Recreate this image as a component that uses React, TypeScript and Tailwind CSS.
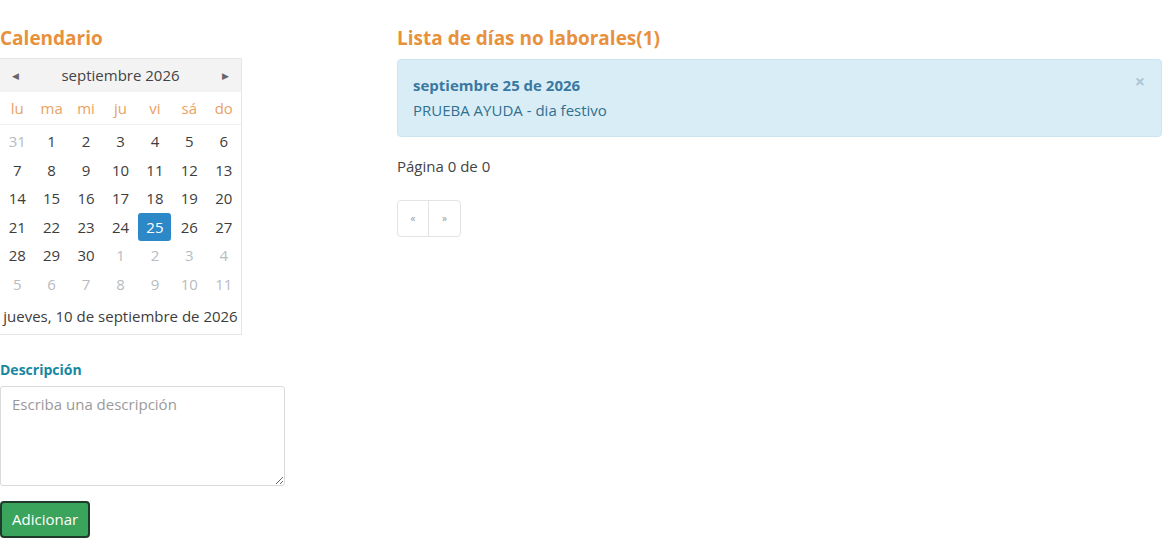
const weeks: { d: number; out?: boolean }[][] = [
  [{ d: 31, out: true }, { d: 1 }, { d: 2 }, { d: 3 }, { d: 4 }, { d: 5 }, { d: 6 }],
  [{ d: 7 }, { d: 8 }, { d: 9 }, { d: 10 }, { d: 11 }, { d: 12 }, { d: 13 }],
  [{ d: 14 }, { d: 15 }, { d: 16 }, { d: 17 }, { d: 18 }, { d: 19 }, { d: 20 }],
  [{ d: 21 }, { d: 22 }, { d: 23 }, { d: 24 }, { d: 25 }, { d: 26 }, { d: 27 }],
  [{ d: 28 }, { d: 29 }, { d: 30 }, { d: 1, out: true }, { d: 2, out: true }, { d: 3, out: true }, { d: 4, out: true }],
  [{ d: 5, out: true }, { d: 6, out: true }, { d: 7, out: true }, { d: 8, out: true }, { d: 9, out: true }, { d: 10, out: true }, { d: 11, out: true }],
]

const weekdays = ['lu', 'ma', 'mi', 'ju', 'vi', 'sá', 'do']

function Calendar() {
  return (
    <div className="w-[242px] border border-l-0 border-[#e6e6e6] bg-white">
      <div className="flex h-[33px] items-center justify-between bg-[#f3f3f4] px-3 text-[15px] text-[#444]">
        <span className="text-[9px] text-[#666]">◀</span>
        <span>septiembre 2026</span>
        <span className="text-[9px] text-[#666]">▶</span>
      </div>
      <div className="grid h-[33px] grid-cols-7 items-center border-b border-[#f0f0f0] text-[15px] text-[#e9a264]">
        {weekdays.map((w) => (
          <span key={w} className="text-center">{w}</span>
        ))}
      </div>
      <div className="pt-[2px]">
        {weeks.map((row, i) => (
          <div key={i} className="grid h-[28.5px] grid-cols-7 items-center text-[15px]">
            {row.map((c, j) => {
              const sel = !c.out && c.d === 25
              return (
                <div key={j} className="flex justify-center">
                  <span
                    className={
                      sel
                        ? 'flex h-[28px] w-[33px] items-center justify-center rounded-[3px] bg-[#2d88c8] text-white'
                        : c.out
                          ? 'text-[#b8bcc0]'
                          : 'text-[#3d3d3d]'
                    }
                  >
                    {c.d}
                  </span>
                </div>
              )
            })}
          </div>
        ))}
      </div>
      <div className="flex h-[36px] items-center justify-center text-[15px] text-[#3d3d3d]">
        jueves, 10 de septiembre de 2026
      </div>
    </div>
  )
}

export default function App() {
  return (
    <div
      className="flex min-h-[542px] gap-[112px] bg-white pt-[26px]"
      style={{ fontFamily: '"Open Sans", "Liberation Sans", sans-serif' }}
    >
      <div className="w-[285px] shrink-0">
        <h2 className="mb-[8px] h-[24px] text-[19px] font-bold leading-[24px] text-[#e8913d]">Calendario</h2>
        <Calendar />
        <label className="mt-[26px] block text-[14px] font-bold leading-[18px] text-[#17879f]">Descripción</label>
        <textarea
          placeholder="Escriba una descripción"
          className="mt-[7px] block h-[100px] w-[285px] rounded-[3px] border border-[#d9d9d9] px-[11px] py-[6px] text-[15px] text-[#444] placeholder:text-[#9a9a9a] focus:outline-none"
        />
        <button className="mt-[15px] h-[37px] rounded-[4px] border-2 border-[#1e3a2a] bg-[#3aa35c] px-[10px] text-[15px] text-white">
          Adicionar
        </button>
      </div>
      <div className="flex-1 pr-[2px]">
        <h2 className="mb-[9px] h-[24px] text-[19px] font-bold leading-[24px] text-[#e8913d]">
          Lista de días no laborales(1)
        </h2>
        <div className="relative h-[78px] rounded-[4px] border border-[#c9e6f1] bg-[#d9edf7] px-[15px] pt-[14px] text-[#31708f]">
          <div className="text-[15px] font-bold text-[#3a78a0]">septiembre 25 de 2026</div>
          <div className="mt-[2px] text-[15px]">PRUEBA AYUDA - dia festivo</div>
          <span className="absolute right-[16px] top-[12px] text-[18px] font-bold leading-none text-[#a9c7d6]">×</span>
        </div>
        <p className="mt-[18px] text-[15px] text-[#444]">Página 0 de 0</p>
        <div className="mt-[22px] flex h-[37px] w-[64px] rounded-[4px] border border-[#e3e3e3] text-[10px] text-[#999]">
          <span className="flex w-1/2 items-center justify-center border-r border-[#e3e3e3]">«</span>
          <span className="flex w-1/2 items-center justify-center">»</span>
        </div>
      </div>
    </div>
  )
}
